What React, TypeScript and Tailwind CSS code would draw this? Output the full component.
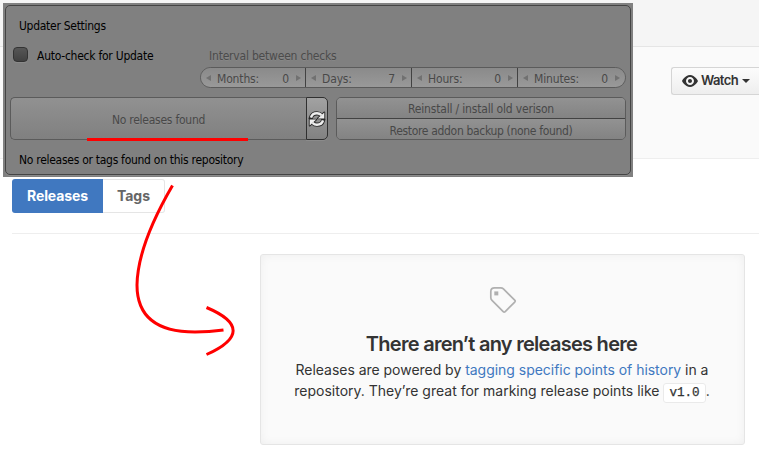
import type { ReactNode } from "react";

const embossed = "[text-shadow:0_1px_0_rgba(255,255,255,0.07)]";

function NumberField({ label, value, className }: { label: string; value: number; className: string }) {
  return (
    <div className={`flex items-center bg-linear-to-b from-[#8a8a8a] to-[#999999] text-[#484848] ${className}`}>
      <svg viewBox="0 0 5 6" className="h-[6px] w-[5px] shrink-0 fill-[#717171]"><path d="M5 0v6L0 3z" /></svg>
      <span className="ml-[6px] flex-1 pt-[2px] tracking-[-0.15px]">{label}</span>
      <span className="pt-[2px]">{value}</span>
      <svg viewBox="0 0 5 6" className="ml-[7px] h-[6px] w-[5px] shrink-0 fill-[#717171]"><path d="M0 0v6l5-3z" /></svg>
    </div>
  );
}

function RefreshIcon() {
  const arcs = "M3 7.600C3.800 4.500 6 3.300 9 3.300c1.900 0 3.300.7 4.500 1.900M15 10.400c-.8 3.100-3 4.300-6 4.300-1.900 0-3.300-.7-4.500-1.900";
  const heads = "M16.300 2.400v6h-6.500zM1.700 15.600v-6h6.500z";
  return (
    <svg viewBox="0 0 18 18" className="h-[18px] w-[18px]" fill="none">
      <path d={arcs} stroke="#292929" strokeWidth="4.200" strokeLinecap="square" />
      <path d={heads} stroke="#292929" strokeWidth="1.800" strokeLinejoin="round" />
      <path d={arcs} stroke="#eeeeee" strokeWidth="2.400" />
      <path d={heads} fill="#eeeeee" />
    </svg>
  );
}

function UpdaterPanel() {
  return (
    <aside className="absolute left-[3px] top-[3px] h-[174px] w-[630px] bg-[#808080] p-[2px] [font-family:'DejaVu_Sans_Condensed','DejaVu_Sans',sans-serif] text-[12px] leading-[14px] whitespace-nowrap text-black">
      <div className="h-[170px] w-[626px] rounded-[5px] border border-[#444444] shadow-[0_1px_0_#8b8b8b]">
        <h2 className="pl-[13px] pt-[13px] tracking-[-0.28px]">Updater Settings</h2>
        <div className="mt-[14px] flex h-[15px] items-center pl-[7px]">
          <span className="h-[15px] w-[15px] rounded-[4px] border border-[#333333] bg-linear-to-b from-[#565656] to-[#414141] shadow-[0_1px_0_#8b8b8b]" />
          <span className="ml-[9px] w-[172px] pt-[3px] tracking-[-0.25px]">Auto-check for Update</span>
          <span className={`pt-[3px] tracking-[-0.2px] text-[#4b4b4b] ${embossed}`}>Interval between checks</span>
        </div>
        <div className={`ml-[194px] mt-[5px] flex h-[21px] w-[426px] overflow-hidden rounded-full border border-[#5b5b5b] ${embossed}`}>
          <NumberField label="Months:" value={0} className="w-[105px] border-r border-[#424242] pl-[5px] pr-[4px]" />
          <NumberField label="Days:" value={7} className="w-[106px] border-r border-[#424242] pl-[5px] pr-[4px]" />
          <NumberField label="Hours:" value={0} className="w-[106px] border-r border-[#424242] pl-[5px] pr-[4px]" />
          <NumberField label="Minutes:" value={0} className="flex-1 pl-[5px] pr-[5px]" />
        </div>
        <div className="mt-[9px] flex h-[43px] pl-[4px] text-[#484848]">
          <button className={`relative w-[296px] rounded-l-[5px] border border-r-0 border-[#5b5b5b] bg-linear-to-b from-[#919191] to-[#808080] pt-[3px] tracking-[-0.25px] ${embossed}`}>
            No releases found
            <span className="absolute left-[76px] top-[40px] h-[3px] w-[161px] bg-[#ff0000]" />
          </button>
          <button className="flex w-[22px] items-center justify-center rounded-r-[5px] border border-[#303030] bg-linear-to-b from-[#a2a2a2] to-[#818181] shadow-[0_1px_0_#8b8b8b]">
            <RefreshIcon />
          </button>
          <div className={`ml-[8px] flex w-[290px] flex-col overflow-hidden rounded-[5px] border border-[#5b5b5b] ${embossed}`}>
            <button className="h-[21px] border-b border-[#424242] bg-linear-to-b from-[#929292] to-[#838383] pt-[2px] tracking-[-0.18px]">Reinstall / install old verison</button>
            <button className="h-[20px] bg-linear-to-b from-[#929292] to-[#838383] pt-[3px] tracking-[-0.33px]">Restore addon backup (none found)</button>
          </div>
        </div>
        <p className="mt-[13px] pl-[13px] tracking-[-0.28px]">No releases or tags found on this repository</p>
      </div>
    </aside>
  );
}

function SketchArrow() {
  return (
    <svg viewBox="0 0 759 464" className="pointer-events-none absolute left-0 top-0 h-[464px] w-[759px]" fill="none" stroke="#ff0000" strokeWidth="3">
      <path d="M172.5 185.5C153 219 137.5 253 137 285c0 29 17 47 58 47q14 0 28.500-2" />
      <path d="M206.500 307.500c35.500 15 35.500 31 0 47" />
    </svg>
  );
}

function Text({ className, children }: { className: string; children: ReactNode }) {
  return <p className={`whitespace-nowrap text-center text-[#333333] ${className}`}>{children}</p>;
}

export default function App() {
  return (
    <div className="relative h-[464px] w-[759px] overflow-hidden bg-white font-['Inter','Liberation_Sans',sans-serif]">
      <header className="h-[47px] border-b border-[#e5e5e5] bg-[#f5f5f5]" />
      <section className="flex h-[112px] items-start justify-end border-b border-[#eeeeee] bg-[#fafafa] pt-[20px]">
        <button className="flex h-[28px] w-[88px] shrink-0 items-center rounded-l-[3px] border border-r-0 border-[#d5d5d5] bg-linear-to-b from-[#fcfcfc] to-[#eeeeee] pl-[10px] text-[13px] font-semibold text-[#333333]">
          <svg viewBox="0 0 16 16" className="h-[16px] w-[16px] fill-[#333333]">
            <path fillRule="evenodd" d="M8.060 2C3 2 0 8 0 8s3 6 8.060 6C13 14 16 8 16 8s-3-6-7.940-6zM8 12c-2.200 0-4-1.780-4-4 0-2.200 1.800-4 4-4 2.220 0 4 1.800 4 4 0 2.220-1.780 4-4 4zm2-4c0 1.110-.890 2-2 2-1.110 0-2-.890-2-2 0-1.110.890-2 2-2 1.110 0 2 .890 2 2z" />
          </svg>
          <span className="ml-[3px] tracking-[-0.6px]">Watch</span>
          <svg viewBox="0 0 8 4" className="ml-[4px] h-[4px] w-[8px] fill-[#333333]"><path d="M0 0h8L4 4z" /></svg>
        </button>
      </section>

      <main className="pl-[12px]">
        <nav className="flex h-[75px] items-start border-b border-[#eeeeee] pt-[20px] text-[14px] font-bold">
          <a className="flex h-[34px] w-[91px] items-center justify-center rounded-l-[3px] bg-[#4078c0] pb-px tracking-[-0.1px] text-white">Releases</a>
          <a className="flex h-[34px] w-[62px] items-center justify-center rounded-r-[3px] border border-l-0 border-[#e5e5e5] bg-white pb-px text-[#666666]">Tags</a>
        </nav>
        <article className="ml-[248px] mt-[20px] h-[191px] w-[485px] rounded-[3px] border border-[#e5e5e5] bg-[#fafafa] pt-[31px] shadow-[inset_0_0_10px_rgba(0,0,0,0.05)]">
          <svg viewBox="0 0 28 28" className="mx-auto h-[28px] w-[28px]" fill="none" stroke="#b0b0b0" strokeWidth="1.7">
            <path d="M5.500 1.800h6.300q1.500 0 2.600 1.100l11.300 11.200q1 1 0 2l-9.500 9.500q-1 1-2 0L3 14.400q-1.200-1.200-1.200-2.700V5.500q0-3.700 3.700-3.700z" />
            <path d="M5.300 5.400h4v4h-4z" fill="#b0b0b0" stroke="none" />
          </svg>
          <h3 className="mt-[16px] pr-[2px] whitespace-nowrap text-center text-[20px] leading-[28px] font-semibold tracking-[-0.72px] text-[#333333]">There aren’t any releases here</h3>
          <Text className="mt-px pr-px text-[14px] leading-[21px] tracking-[-0.03px]">
            Releases are powered by <a className="text-[#4078c0]">tagging specific points of history</a> in a
          </Text>
          <Text className="pr-px text-[14px] leading-[21px]">
            repository. They’re great for marking release points like{" "}
            <code className="rounded-[3px] border border-[#eaeaea] bg-white px-[5px] py-[2px] font-['Liberation_Mono',monospace] text-[12.6px] tracking-normal [-webkit-text-stroke:0.25px_#333333]">v1.0</code>.
          </Text>
        </article>
      </main>
      <UpdaterPanel />
      <SketchArrow />
    </div>
  );
}
